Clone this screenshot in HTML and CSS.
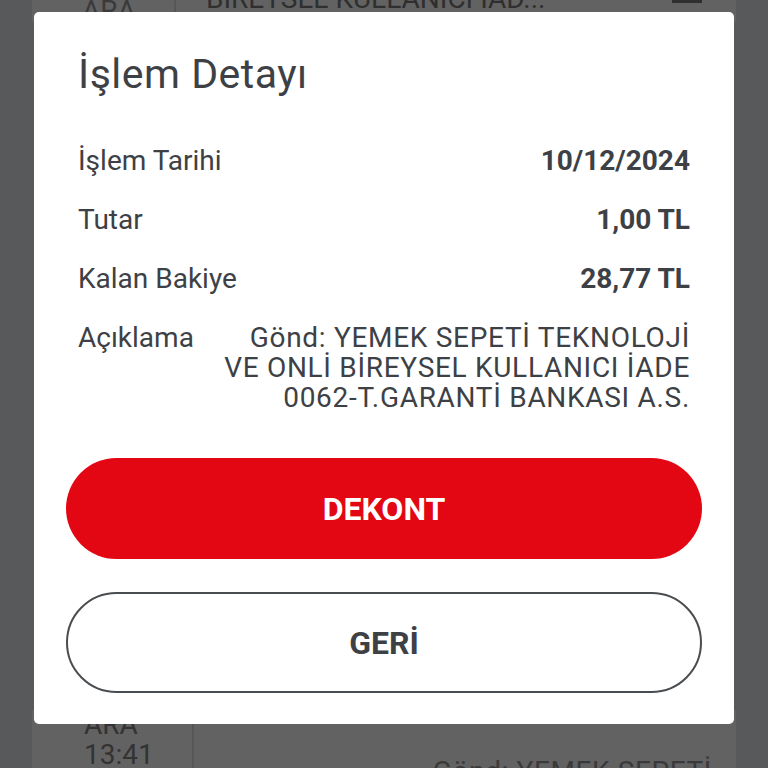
FILE: index.html
```html
<!DOCTYPE html>
<html lang="tr">
<head>
<meta charset="utf-8">
<title>İşlem Detayı</title>
<link rel="stylesheet" href="styles.css">
</head>
<body>
<div class="screen">
  <div class="page">
    <div class="item item-top">
      <div class="item-time">ARA</div>
      <div class="item-text">BİREYSEL KULLANICI İAD...</div>
      <div class="item-icon"></div>
    </div>
    <div class="item item-bottom">
      <div class="item-time">ARA<br>13:41</div>
      <div class="item-text item-text-bottom">Gönd: YEMEK SEPETİ</div>
    </div>
  </div>

  <div class="modal">
    <h1 class="modal-title">İşlem Detayı</h1>
    <div class="details">
      <div class="row">
        <span class="label">İşlem Tarihi</span>
        <span class="value">10/12/2024</span>
      </div>
      <div class="row">
        <span class="label">Tutar</span>
        <span class="value">1,00 TL</span>
      </div>
      <div class="row">
        <span class="label">Kalan Bakiye</span>
        <span class="value">28,77 TL</span>
      </div>
      <div class="row">
        <span class="label">Açıklama</span>
        <span class="desc">Gönd: YEMEK SEPETİ TEKNOLOJİ<br>VE ONLİ BİREYSEL KULLANICI İADE<br>0062-T.GARANTİ BANKASI A.S.</span>
      </div>
    </div>
    <div class="actions">
      <button class="btn btn-primary">DEKONT</button>
      <button class="btn btn-outline">GERİ</button>
    </div>
  </div>
</div>
</body>
</html>
```
FILE: styles.css
```css
* { box-sizing: border-box; }
html, body {
  margin: 0;
  padding: 0;
}
body {
  width: 768px;
  height: 768px;
  overflow: hidden;
  background: #58595b;
  font-family: Roboto, "Liberation Sans", sans-serif;
}
.screen {
  position: relative;
  width: 768px;
  height: 768px;
}
.page {
  padding: 0 32px;
  display: flex;
  flex-direction: column;
  justify-content: space-between;
  height: 768px;
}
.item {
  display: flex;
  background: #626262;
  color: #2f2f2f;
  font-size: 28px;
}
.item-top {
  height: 40px;
  margin-top: -18px;
  align-items: flex-start;
}
.item-top .item-time {
  width: 144px;
  padding: 12px 0 0 50px;
  border-right: 2px solid #575757;
  color: #3a3a3a;
}
.item-top .item-text {
  padding: 0 0 0 30px;
  flex: 1;
  line-height: 30px;
  margin-top: 2px;
}
.item-icon {
  width: 30px;
  height: 3px;
  background: #2f2f2f;
  margin: 18px 34px 0 0;
}
.item-bottom {
  height: 88px;
  margin-bottom: -30px;
}
.item-bottom .item-time {
  width: 162px;
  padding: 0 0 0 52px;
  line-height: 30px;
  border-right: 2px solid #575757;
  color: #333;
}
.item-text-bottom {
  flex: 1;
  text-align: right;
  padding: 45px 24px 0 0;
  color: #3a3a3a;
  letter-spacing: 0.6px;
}

.modal {
  position: absolute;
  left: 34px;
  top: 12px;
  width: 700px;
  height: 712px;
  background: #ffffff;
  border-radius: 5px;
  padding: 38px 0 31px;
  display: flex;
  flex-direction: column;
  color: #3d4145;
}
.modal-title {
  margin: 0;
  padding: 0 44px;
  font-size: 41px;
  line-height: 48px;
  font-weight: 400;
  letter-spacing: 0.5px;
}
.details {
  margin-top: 48px;
  padding: 0 44px;
  display: flex;
  flex-direction: column;
  gap: 29px;
}
.row {
  display: flex;
  justify-content: space-between;
  align-items: flex-start;
  font-size: 28px;
  line-height: 30px;
}
.value {
  font-weight: 700;
}
.desc {
  text-align: right;
  letter-spacing: 0.7px;
}
.actions {
  margin-top: 45px;
  padding: 0 32px;
  display: flex;
  flex-direction: column;
  gap: 33px;
}
.btn {
  height: 101px;
  border-radius: 51px;
  font-family: Roboto, "Liberation Sans", sans-serif;
  font-size: 32px;
  font-weight: 700;
  cursor: pointer;
}
.btn-primary {
  background: #e30613;
  border: none;
  color: #ffffff;
}
.btn-outline {
  background: #ffffff;
  border: 2px solid #4a4d50;
  color: #3d4145;
}
```
